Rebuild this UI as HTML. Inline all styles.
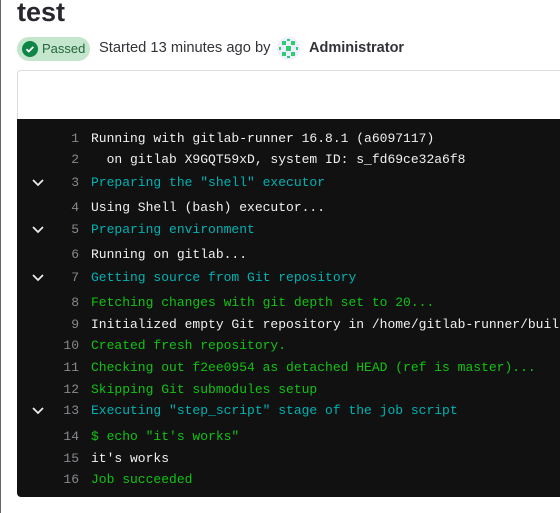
<html><head><style>
body{margin:0;width:560px;height:513px;background:#fff;position:relative;overflow:hidden;font-family:"Liberation Sans",sans-serif}
.lb{position:absolute;left:0;top:0;width:1px;height:513px;background:#666}
h1{position:absolute;left:17px;top:-3px;margin:0;font-size:27px;font-weight:bold;color:#28272d}
.badge{position:absolute;left:17px;top:37px;width:73px;height:24px;border-radius:12px;background:#c3e6cd;color:#24663b;font-size:13px;line-height:24px}
.badge .ic{position:absolute;left:5px;top:4px;width:16px;height:16px;border-radius:50%;background:#108548}
.meta{position:absolute;left:99px;top:40px;font-size:14.7px;color:#333238}
.av{position:absolute;left:277px;top:37px;width:23px;height:23px;border-radius:50%;background:#eef}
.adm{position:absolute;left:309px;top:40px;font-size:14.5px;font-weight:bold;color:#333238}
.hdr{position:absolute;left:17px;top:70px;width:560px;height:48px;border:1px solid #dcdcde;border-radius:4px 0 0 0;border-bottom:none}
.term{position:absolute;left:17px;top:119px;width:560px;height:378px;background:#111112;border-radius:0 0 0 4px}
.l{position:absolute;left:0;height:20px;font-family:"Liberation Mono",monospace;font-size:13px;line-height:20px;white-space:pre;color:#f0f0f0}
.n{position:absolute;left:0;width:62px;text-align:right;color:#89888d}
.t{position:absolute;left:74px}
.c{color:#00b2b2}.g{color:#12c212}
.ch{position:absolute;left:15px;top:6px}
</style></head><body>
<div class="lb"></div>
<h1>test</h1>
<div class="badge"><div class="ic"><svg width="16" height="16"><path d="M4.5 8.2l2.3 2.3 4.5-4.6" stroke="#fff" stroke-width="1.8" fill="none"/></svg></div><span style="position:absolute;left:25px">Passed</span></div>
<div class="meta">Started 13 minutes ago by</div>
<div class="av"><svg width="23" height="23"><g fill="#2ecc71"><rect x="5" y="4" width="4" height="4"/><rect x="14" y="4" width="4" height="4"/><rect x="9" y="9" width="5" height="5"/><rect x="5" y="15" width="4" height="4"/><rect x="14" y="15" width="4" height="4"/><rect x="2" y="10" width="2" height="3"/><rect x="19" y="10" width="2" height="3"/><rect x="10" y="2" width="3" height="2"/><rect x="10" y="19" width="3" height="2"/></g></svg></div>
<div class="adm">Administrator</div>
<div class="hdr"></div>
<div class="term">
<div class="l" style="top:10px"><span class="n">1</span><span class="t">Running with gitlab-runner 16.8.1 (a6097117)</span></div>
<div class="l" style="top:31px"><span class="n">2</span><span class="t">  on gitlab X9GQT59xD, system ID: s_fd69ce32a6f8</span></div>
<div class="l" style="top:54px"><svg class="ch" width="12" height="8"><path d="M1 1l5 5 5-5" stroke="#eee" stroke-width="1.7" fill="none"/></svg><span class="n">3</span><span class="t c">Preparing the "shell" executor</span></div>
<div class="l" style="top:79px"><span class="n">4</span><span class="t">Using Shell (bash) executor...</span></div>
<div class="l" style="top:101px"><svg class="ch" width="12" height="8"><path d="M1 1l5 5 5-5" stroke="#eee" stroke-width="1.7" fill="none"/></svg><span class="n">5</span><span class="t c">Preparing environment</span></div>
<div class="l" style="top:126px"><span class="n">6</span><span class="t">Running on gitlab...</span></div>
<div class="l" style="top:149px"><svg class="ch" width="12" height="8"><path d="M1 1l5 5 5-5" stroke="#eee" stroke-width="1.7" fill="none"/></svg><span class="n">7</span><span class="t c">Getting source from Git repository</span></div>
<div class="l" style="top:174px"><span class="n">8</span><span class="t g">Fetching changes with git depth set to 20...</span></div>
<div class="l" style="top:196px"><span class="n">9</span><span class="t">Initialized empty Git repository in /home/gitlab-runner/builds/</span></div>
<div class="l" style="top:217px"><span class="n">10</span><span class="t g">Created fresh repository.</span></div>
<div class="l" style="top:239px"><span class="n">11</span><span class="t g">Checking out f2ee0954 as detached HEAD (ref is master)...</span></div>
<div class="l" style="top:261px"><span class="n">12</span><span class="t g">Skipping Git submodules setup</span></div>
<div class="l" style="top:282px"><svg class="ch" width="12" height="8"><path d="M1 1l5 5 5-5" stroke="#eee" stroke-width="1.7" fill="none"/></svg><span class="n">13</span><span class="t c">Executing "step_script" stage of the job script</span></div>
<div class="l" style="top:308px"><span class="n">14</span><span class="t g">$ echo "it's works"</span></div>
<div class="l" style="top:330px"><span class="n">15</span><span class="t">it's works</span></div>
<div class="l" style="top:351px"><span class="n">16</span><span class="t g">Job succeeded</span></div>
</div>
</body></html>
